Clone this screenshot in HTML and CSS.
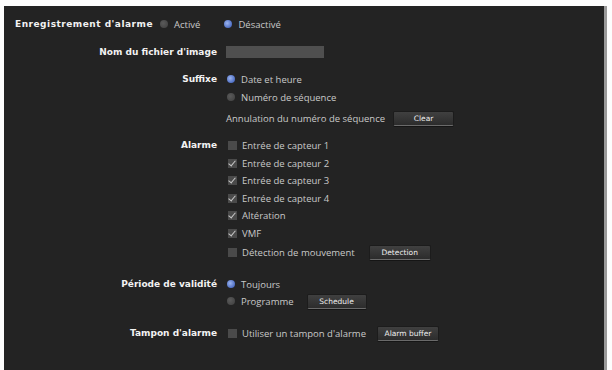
FILE: index.html
```html
<!DOCTYPE html>
<html lang="fr">
<head>
    <meta charset="UTF-8">
    <title>Enregistrement d'alarme</title>
    <link rel="stylesheet" href="styles.css">
</head>
<body>
    <div class="panel">
        <div class="top-row">
            <span class="label">Enregistrement d'alarme</span>
            <span class="radio"></span><span class="opt">Activé</span>
            <span class="radio on gap"></span><span class="opt">Désactivé</span>
        </div>

        <div class="section sec-name">
            <div class="side">Nom du fichier d'image</div>
            <div class="controls">
                <div class="line"><span class="field"></span></div>
            </div>
        </div>

        <div class="section sec-suffix">
            <div class="side">Suffixe</div>
            <div class="controls">
                <div class="line"><span class="radio on"></span>Date et heure</div>
                <div class="line"><span class="radio"></span>Numéro de séquence</div>
                <div class="line clear-line">Annulation du numéro de séquence <button class="btn btn-clear">Clear</button></div>
            </div>
        </div>

        <div class="section sec-alarm">
            <div class="side">Alarme</div>
            <div class="controls">
                <div class="line short"><span class="check"></span>Entrée de capteur 1</div>
                <div class="line short"><span class="check on"></span>Entrée de capteur 2</div>
                <div class="line short"><span class="check on"></span>Entrée de capteur 3</div>
                <div class="line short"><span class="check on"></span>Entrée de capteur 4</div>
                <div class="line short"><span class="check on"></span>Altération</div>
                <div class="line short"><span class="check on"></span>VMF</div>
                <div class="line short last"><span class="check"></span>Détection de mouvement <button class="btn btn-detect">Detection</button></div>
            </div>
        </div>

        <div class="section sec-period">
            <div class="side">Période de validité</div>
            <div class="controls">
                <div class="line mid"><span class="radio on"></span>Toujours</div>
                <div class="line mid"><span class="radio"></span>Programme <button class="btn btn-sched">Schedule</button></div>
            </div>
        </div>

        <div class="section sec-buffer">
            <div class="side">Tampon d'alarme</div>
            <div class="controls">
                <div class="line"><span class="check"></span>Utiliser un tampon d'alarme <button class="btn btn-buffer">Alarm buffer</button></div>
            </div>
        </div>
    </div>
</body>
</html>
```

FILE: styles.css
```css
body {
    margin: 0;
    background: #fdfdfd;
    font-family: "Open Sans", "Noto Sans", sans-serif;
    font-size: 9.5px;
    color: #c9c9c9;
}

.panel {
    margin: 6px 0 0 4px;
    width: 603px;
    height: 364px;
    box-sizing: border-box;
    padding-top: 9px;
    background: #232323;
    border-right: 3px solid #9a9a9a;
}

.label, .side {
    font-family: "DejaVu Sans", Verdana, sans-serif;
    font-weight: bold;
    font-size: 9px;
    color: #f2f2f2;
}

.top-row {
    display: flex;
    align-items: center;
    height: 18px;
    padding-left: 11px;
}

.top-row .label {
    letter-spacing: 0.5px;
    margin-right: 6px;
}

.top-row .gap {
    margin-left: 24px;
}

.section {
    display: flex;
}

.side {
    width: 213px;
    text-align: right;
    line-height: 18px;
    height: 18px;
    flex-shrink: 0;
}

.controls {
    margin-left: 9px;
    display: flex;
    flex-direction: column;
}

.line {
    display: flex;
    align-items: center;
    height: 18px;
    white-space: nowrap;
}

.line.short { height: 17.5px; }
.line.mid { height: 17px; }
.line.last { margin-top: 2px; }

.sec-name { margin-top: 10px; }
.sec-suffix { margin-top: 9px; }
.clear-line { margin-top: 3px; }
.sec-alarm { margin-top: 10px; }
.sec-alarm .side { line-height: 17.5px; }
.sec-period { margin-top: 14px; }
.sec-period .side { line-height: 17px; }
.sec-buffer { margin-top: 14.5px; }

.field {
    display: block;
    width: 98px;
    height: 12px;
    background: #4f4f4f;
}

.radio {
    display: inline-block;
    width: 8px;
    height: 8px;
    border-radius: 50%;
    background: radial-gradient(circle at 40% 40%, #5a5a5a, #3e3e3e);
    margin: 0 6px 0 1px;
    flex-shrink: 0;
}

.radio.on {
    background: radial-gradient(circle at 40% 40%, #9bb4ef, #4f6fc4 70%, #3a55a0);
}

.check {
    position: relative;
    display: inline-block;
    width: 9px;
    height: 9px;
    background: #4a4a4a;
    margin: 0 5px 0 2px;
    flex-shrink: 0;
}

.check.on::after {
    content: "";
    position: absolute;
    left: 2px;
    top: 0px;
    width: 3px;
    height: 6px;
    border: solid #c8c8c8;
    border-width: 0 1.5px 1.5px 0;
    transform: rotate(40deg);
}

.btn {
    font-family: "DejaVu Sans", Verdana, sans-serif;
    font-size: 7.5px;
    color: #eeeeee;
    height: 15px;
    width: 61px;
    padding: 0;
    border: 1px solid #1c1c1c;
    border-bottom: 1px solid #6a6a6a;
    border-radius: 2px;
    background: linear-gradient(#404040, #2c2c2c);
    box-shadow: 0 1px 0 #151515;
}

.btn-clear { margin-left: 8px; }
.btn-detect { margin-left: 14px; width: 62px; }
.btn-sched { margin-left: 13px; width: 60px; }
.btn-buffer { margin-left: 11px; width: 62px; }
```
